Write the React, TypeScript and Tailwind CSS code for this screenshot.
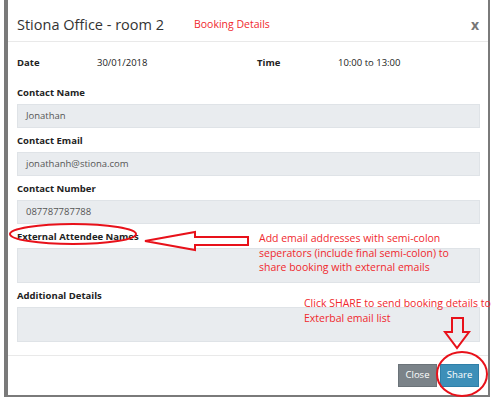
import React from 'react';

const font = { fontFamily: '"Open Sans", "Noto Sans", sans-serif' };

function Field({ label, value, tall }: { label: string; value?: string; tall?: boolean }) {
  return (
    <div className="mt-[6px]">
      <div className="h-[14px] leading-[14px] text-[9.5px] font-bold text-[#222]">{label}</div>
      <div
        className={`mt-[4px] w-full border border-[#dfe3e7] bg-[#e9ecef] px-[8px] text-[9.5px] text-[#555] ${
          tall ? 'h-[35px]' : 'h-[24px] flex items-center'
        }`}
      >
        {value}
      </div>
    </div>
  );
}

export default function App() {
  return (
    <div className="relative w-[495px] h-[403px] bg-white overflow-hidden" style={font}>
      <div className="ml-[4px] w-[486px] h-[397px] bg-white border-l-4 border-r-2 border-b-2 border-[#7a7a7a] flex flex-col">
        {/* header */}
        <div className="h-[42px] shrink-0 flex items-center px-[9px] pt-[8px] border-b border-[#e9e9e9]">
          <span className="w-[177px] text-[14.5px] text-[#333]">Stiona Office - room 2</span>
          <span className="text-[10.5px] text-[#f0282d]">Booking Details</span>
          <span className="ml-auto text-[14px] font-bold text-[#777]">x</span>
        </div>

        {/* body */}
        <div className="px-[9px] pr-[8px]">
          <div className="mt-[14px] h-[14px] flex items-center text-[9.5px] text-[#222]">
            <span className="w-[80px] font-bold">Date</span>
            <span className="w-[160px]">30/01/2018</span>
            <span className="w-[81px] font-bold">Time</span>
            <span>10:00 to 13:00</span>
          </div>
          <div className="mt-[16px]">
            <Field label="Contact Name" value="Jonathan" />
            <Field label="Contact Email" value="jonathanh@stiona.com" />
            <Field label="Contact Number" value="087787787788" />
            <Field label="External Attendee Names" tall />
            <Field label="Additional Details" tall />
          </div>
        </div>

        {/* footer */}
        <div className="mt-[13px] border-t border-[#e9e9e9] flex justify-end gap-[3px] px-[9px] pt-[8px]">
          <button className="h-[23px] w-[39px] bg-[#7b8389] text-white text-[9.5px] border border-[#6b7379]">Close</button>
          <button className="h-[23px] w-[39px] bg-[#3d8fb8] text-white text-[9.5px] border border-[#2f7fa8]">Share</button>
        </div>
      </div>

      {/* annotations */}
      <svg className="absolute left-0 top-0 pointer-events-none" width="495" height="403" viewBox="0 0 495 403">
        <ellipse cx="73" cy="234" rx="63" ry="10" fill="none" stroke="#e8111a" strokeWidth="2" />
        <path
          d="M145 241 L195 232 L195 237 L248 237 L248 245 L195 245 L195 250 Z"
          fill="none"
          stroke="#e8111a"
          strokeWidth="2"
          strokeLinejoin="miter"
        />
        <path
          d="M452 318 L463 318 L463 332 L469 332 L457 348 L445 332 L452 332 Z"
          fill="none"
          stroke="#e8111a"
          strokeWidth="2"
        />
        <ellipse cx="462" cy="374" rx="25" ry="22" fill="none" stroke="#e8111a" strokeWidth="2" />
      </svg>
      <div className="absolute left-[259px] top-[231px] text-[10.5px] leading-[14.5px] text-[#f0282d] pointer-events-none">
        Add email addresses with semi-colon
        <br />
        seperators (include final semi-colon) to
        <br />
        share booking with external emails
      </div>
      <div className="absolute left-[304px] top-[296px] text-[10.5px] leading-[14.5px] text-[#f0282d] pointer-events-none">
        Click SHARE to send booking details to
        <br />
        Exterbal email list
      </div>
    </div>
  );
}
